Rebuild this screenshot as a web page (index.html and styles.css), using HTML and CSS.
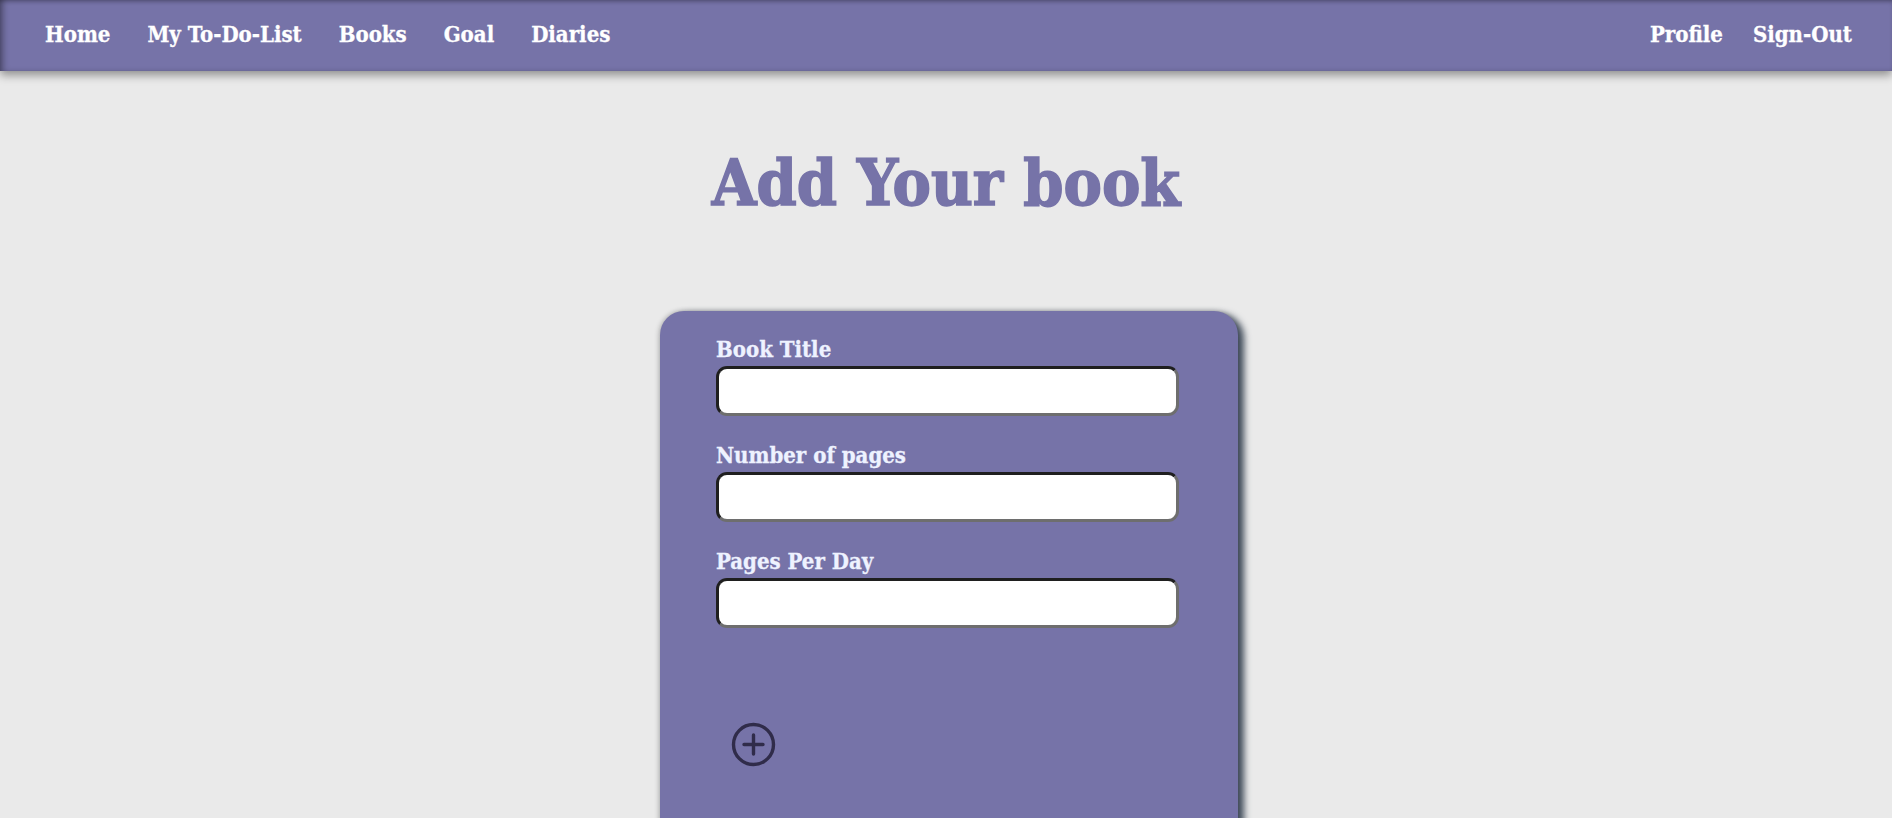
FILE: index.html
```html
<!DOCTYPE html>
<html lang="en">
<head>
<meta charset="utf-8">
<title>Add Your book</title>
<link rel="stylesheet" href="styles.css">
</head>
<body>
<nav class="nav">
  <div class="nav-group">
    <a class="nav-link" href="#">Home</a>
    <a class="nav-link" href="#">My To-Do-List</a>
    <a class="nav-link" href="#">Books</a>
    <a class="nav-link" href="#">Goal</a>
    <a class="nav-link" href="#">Diaries</a>
  </div>
  <div class="nav-group nav-group-right">
    <a class="nav-link" href="#">Profile</a>
    <a class="nav-link" href="#">Sign-Out</a>
  </div>
</nav>
<main class="main">
  <h1 class="title">Add Your book</h1>
  <form class="card">
    <div class="field">
      <label class="label" for="t">Book Title</label>
      <input class="input" id="t" type="text">
    </div>
    <div class="field">
      <label class="label" for="n">Number of pages</label>
      <input class="input" id="n" type="text">
    </div>
    <div class="field">
      <label class="label" for="p">Pages Per Day</label>
      <input class="input" id="p" type="text">
    </div>
    <button class="add-btn" type="button" aria-label="Add">
      <svg width="45" height="45" viewBox="0 0 45 45">
        <circle cx="22.5" cy="22.5" r="20" fill="none" stroke="#302c4a" stroke-width="3.4"/>
        <path d="M22.5 13v19M13 22.5h19" stroke="#302c4a" stroke-width="3.4" stroke-linecap="round"/>
      </svg>
    </button>
  </form>
</main>
</body>
</html>
```

FILE: styles.css
```css
* { box-sizing: border-box; }
html, body { margin: 0; padding: 0; }
body {
  background: #eaeaea;
  font-family: "DejaVu Serif Condensed", "DejaVu Serif", serif;
  font-weight: bold;
  overflow: hidden;
  height: 818px;
}
.nav {
  height: 71px;
  background: #7673a8;
  display: flex;
  justify-content: space-between;
  align-items: center;
  padding: 0 40px 3px 45px;
  box-shadow: 0 4px 9px rgba(0,0,0,0.4), inset 5px 0 6px -2px rgba(0,0,0,0.35), inset 0 3px 5px -2px rgba(0,0,0,0.3);
  position: relative;
  z-index: 2;
}
.nav-group { display: flex; gap: 37px; }
.nav-group-right { gap: 30px; }
.nav-link {
  color: #ffffff;
  text-decoration: none;
  font-size: 22px;
  line-height: 26px;
  -webkit-text-stroke: 0.3px #ffffff;
}
.main { display: flex; flex-direction: column; align-items: center; }
.title {
  margin: 73px 0 90px;
  font-size: 64px;
  line-height: 77px;
  color: #7673a8;
  font-weight: 900;
  letter-spacing: 0;
  -webkit-text-stroke: 1.5px #7673a8;
}
.card {
  width: 578px;
  min-height: 560px;
  background: #7673a8;
  border-radius: 24px;
  padding: 25px 59px 0 56px;
  box-shadow: 6px 3px 7px #3e4958, -1px 0 5px rgba(0,0,0,0.25);
  margin-left: 6px;
}
.field { display: flex; flex-direction: column; margin-bottom: 26px; }
.label {
  color: #eef2ff;
  font-size: 22px;
  line-height: 26px;
  margin-bottom: 4px;
  -webkit-text-stroke: 0.3px #eef2ff;
}
.input {
  height: 50px;
  width: 100%;
  background: #ffffff;
  border: 3px solid;
  border-color: #1f1f1f #6e6e6e #6e6e6e #1f1f1f;
  border-radius: 11px;
}
.add-btn {
  margin: 94px 0 0 15px;
  padding: 0;
  border: 0;
  background: none;
  display: block;
  width: 45px;
  height: 45px;
}
.add-btn svg { display: block; }
```
